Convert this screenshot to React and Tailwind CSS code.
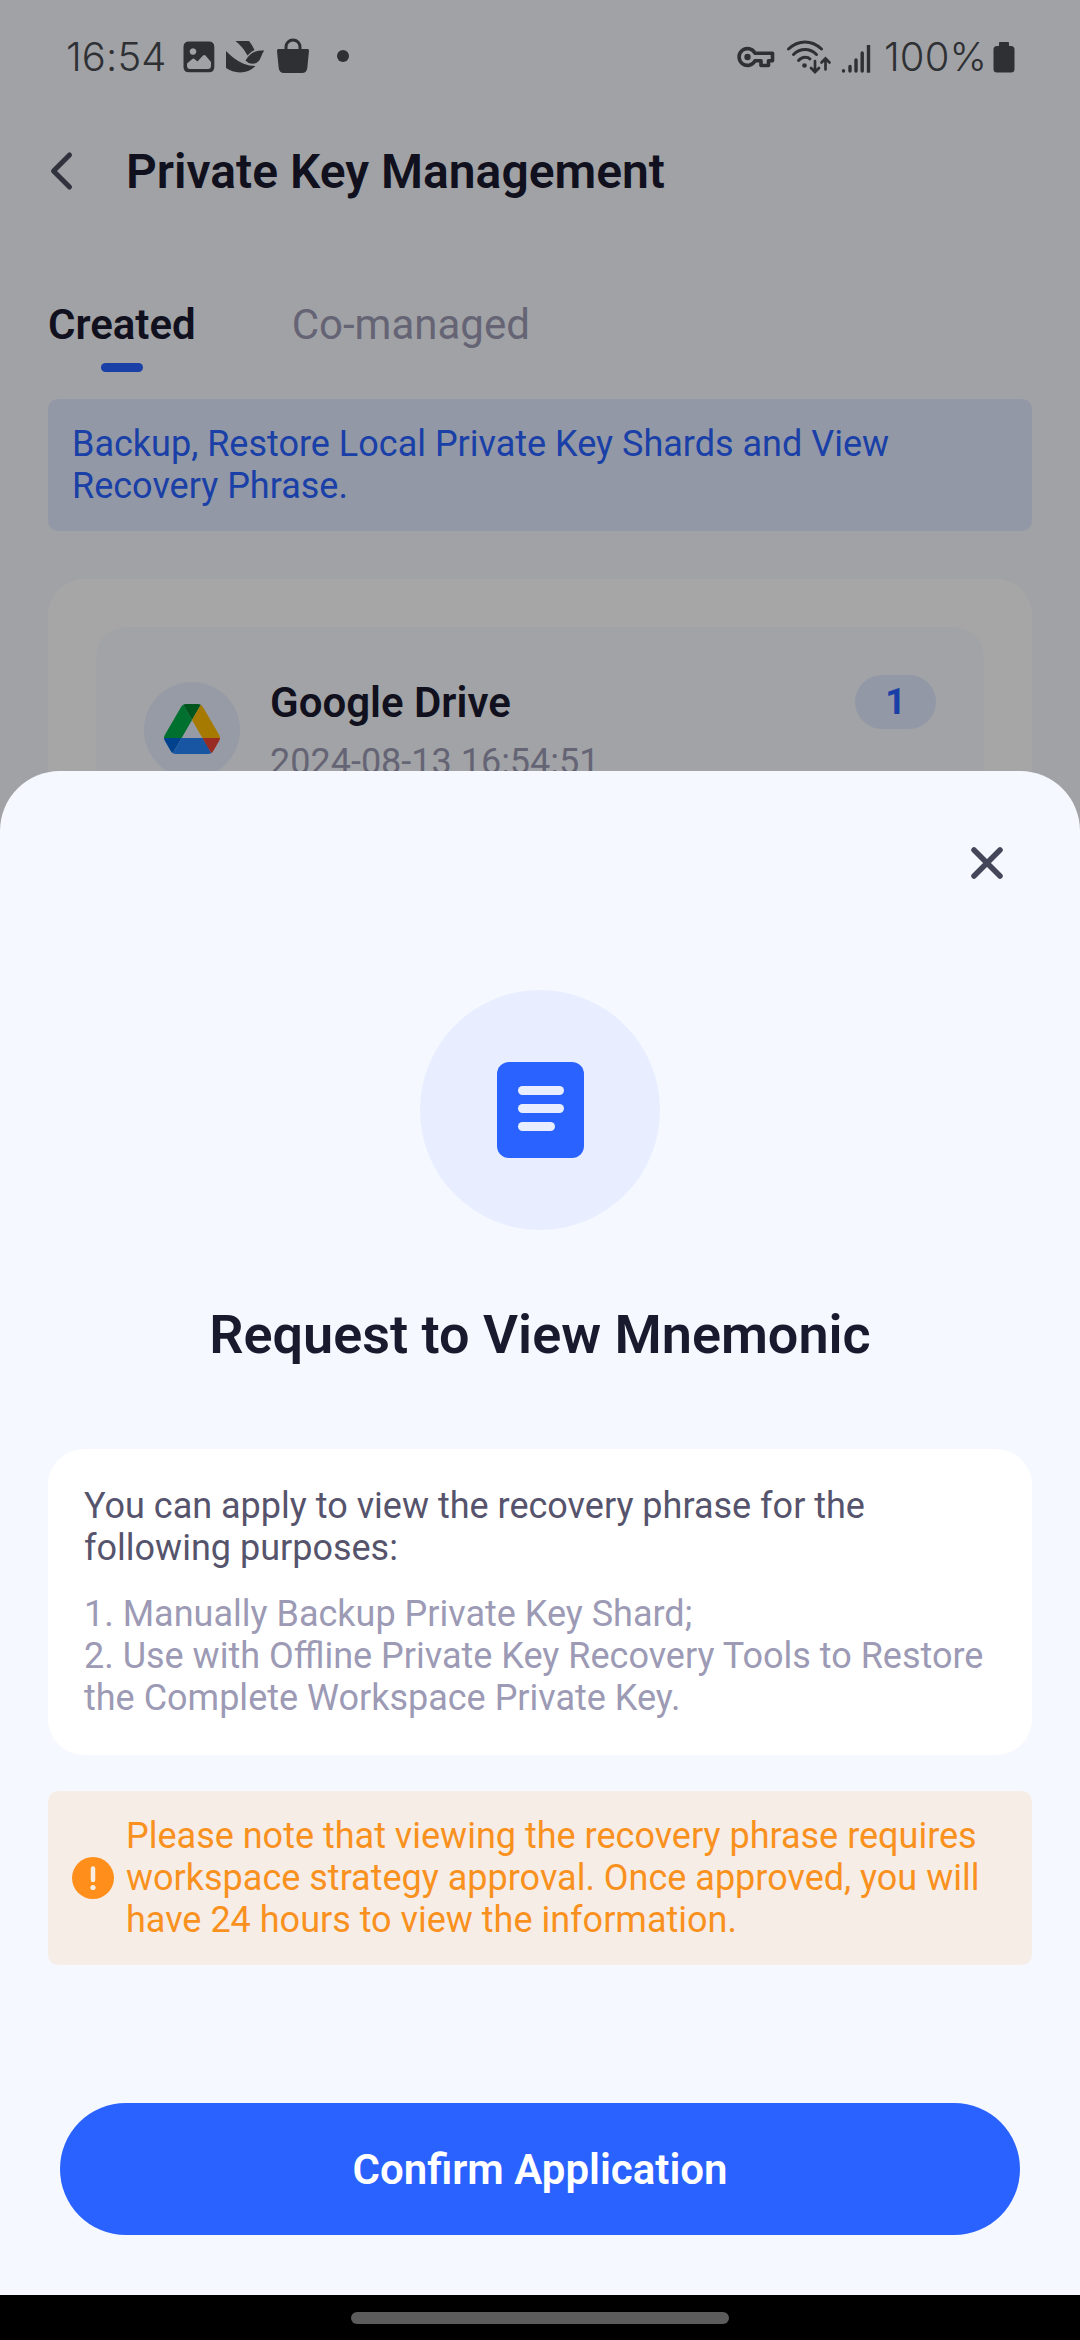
import React from "react";

function ImageIcon() {
  return (
    <svg className="h-[32px] w-[32px]" viewBox="0 0 32 32">
      <path fill="#2e3033" fillRule="evenodd" d="M6 0.5H26Q31.300 0.500 31.300 6V26Q31.300 31.300 26 31.300H6Q0.500 31.300 0.500 26V6Q0.500 0.500 6 0.500ZM10 7.200a3.300 3.300 0 1 0 0.010 0ZM4 24.500Q4 28 7 28H25Q28 28 28 24.500V21L22.500 14.500Q21.300 13.300 20 14.500L14.500 20.500L11.500 18Q10.400 17.200 9.300 18L4 22.500Z" />
    </svg>
  );
}

function BirdIcon() {
  return (
    <svg className="h-[34px] w-[40px]" viewBox="0 0 40 34" fill="#2e3033">
      <path d="M10.500 1H24Q27 4.500 29.500 10Q25 12 22.500 15.500Q18 7 10.500 1Z" />
      <path d="M20.500 20.500Q24.500 13.500 30.500 11.500Q34 10 39.300 10.500Q37.500 12.500 36 17Q33.500 24 27 23.800Q23 23.500 20.500 20.500Z" />
      <path d="M1 11Q9 19.500 18 23.500Q24 26 30.500 26Q24 32.500 15 32.500Q7 32 1 28Z" />
    </svg>
  );
}

function BagIcon() {
  return (
    <svg className="h-[36px] w-[34px]" viewBox="0 0 34 36">
      <path fill="none" stroke="#2e3033" strokeWidth="3" d="M10 12V9a7 7 0 0 1 14 0V12" />
      <path fill="#2e3033" d="M2.500 11H31.500Q33.200 11 33 12.700L31.300 30Q30.800 35 26 35H8Q3.300 35 2.700 30L1 12.700Q0.800 11 2.500 11Z" />
    </svg>
  );
}

function KeyIcon() {
  return (
    <svg className="h-[22px] w-[38px]" viewBox="0 0 38 22">
      <path fill="none" stroke="#2e3033" strokeWidth="3.600" strokeLinejoin="round" d="M18 7.200A8.400 8.400 0 1 0 18 14.800H24V19.500H31.500V14.800H35.500V7.200Z" />
      <circle cx="10.500" cy="11" r="3.200" fill="#2e3033" />
    </svg>
  );
}

function WifiIcon() {
  return (
    <svg className="h-[36px] w-[46px]" viewBox="0 0 46 36" fill="none" stroke="#2e3033" strokeWidth="3" strokeLinecap="round">
      <path d="M2.500 10Q10 3 19 3T35.500 10" />
      <path d="M7.500 15.500Q12.500 10.500 19 10.500T30.500 15.500" />
      <path d="M12.500 21.500Q15.500 18.300 19 18.300T24 20" />
      <circle cx="18.500" cy="26.500" r="2.300" fill="#2e3033" stroke="none" />
      <path strokeWidth="2.700" d="M29 22V32.500M25 29L29 33L33 29M39.500 30.500V20M35.500 23.500L39.500 19.500L43.500 23.500" />
    </svg>
  );
}

function SignalIcon() {
  return (
    <svg className="h-[30px] w-[30px]" viewBox="0 0 30 30" stroke="#2e3033" strokeWidth="3.400" strokeLinecap="round">
      <path d="M2.500 26.800V27M9 22.500V27M15 16V27M21.200 9V27" />
      <path strokeLinecap="butt" d="M27.500 1V28.700" />
    </svg>
  );
}

function BatteryIcon() {
  return (
    <svg className="h-[32px] w-[22px]" viewBox="0 0 22 32" fill="#2e3033">
      <path d="M7 1H15Q16 1 16 2V5H18Q21.500 5 21.500 8.500V28Q21.500 31.500 18 31.500H4Q0.500 31.500 0.500 28V8.500Q0.500 5 4 5H6V2Q6 1 7 1Z" />
    </svg>
  );
}

function StatusBar() {
  return (
    <div className="absolute inset-x-0 top-0 flex h-[114px] items-center pl-[66px] pr-[65px] text-[#2e3033]">
      <span className="w-[117px] font-['Inter',sans-serif] text-[40px] font-light leading-[48px] tracking-[0.1px]">16:54</span>
      <ImageIcon />
      <div className="ml-[10px]"><BirdIcon /></div>
      <div className="ml-[11px] -mt-[3px]"><BagIcon /></div>
      <div className="ml-[27px] -mt-[2px] h-[12px] w-[12px] rounded-full bg-[#2e3033]" />
      <div className="ml-auto"><KeyIcon /></div>
      <div className="ml-[11px]"><WifiIcon /></div>
      <div className="ml-[9px] mt-[3px]"><SignalIcon /></div>
      <span className="ml-[13px] w-[109px] whitespace-nowrap font-['Inter',sans-serif] text-[40px] font-light leading-[48px] tracking-[0.1px]">100%</span>
      <BatteryIcon />
    </div>
  );
}

function DriveLogo() {
  return (
    <svg className="-mt-[2px] h-[50px] w-[56px]" viewBox="0 0 87.3 78">
      <path fill="#0066da" d="m6.600 66.850 3.850 6.650c.8 1.400 1.950 2.500 3.300 3.300l13.750-23.800h-27.500c0 1.550.4 3.100 1.200 4.500z" />
      <path fill="#00ac47" d="m43.650 25-13.750-23.800c-1.350.8-2.500 1.900-3.300 3.300l-25.400 44a9.060 9.060 0 0 0 -1.200 4.500h27.500z" />
      <path fill="#ea4335" d="m73.550 76.800c1.350-.8 2.500-1.900 3.300-3.300l1.600-2.750 7.650-13.250c.8-1.400 1.200-2.950 1.200-4.500h-27.502l5.852 11.500z" />
      <path fill="#00832d" d="m43.650 25 13.750-23.800c-1.350-.8-2.900-1.200-4.500-1.200h-18.500c-1.600 0-3.150.45-4.500 1.200z" />
      <path fill="#2684fc" d="m59.800 53h-32.300l-13.750 23.800c1.350.8 2.900 1.200 4.500 1.200h50.800c1.600 0 3.150-.45 4.500-1.200z" />
      <path fill="#ffba00" d="m73.400 26.500-12.700-22c-.8-1.400-1.950-2.500-3.300-3.300l-13.750 23.800 16.150 28h27.450c0-1.550-.4-3.100-1.200-4.500z" />
    </svg>
  );
}

function KeyManagementPage() {
  return (
    <div className="h-full bg-[#f7f9ff] pt-[114px]">
      <header className="flex h-[114px] items-center">
        <svg className="ml-[48px] h-[42px] w-[28px]" viewBox="0 0 28 42">
          <path d="M21.500 5L5.500 21L21.500 37" fill="none" stroke="#4b4e60" strokeWidth="5" strokeLinecap="round" strokeLinejoin="round" />
        </svg>
        <h1 className="ml-[50px] mt-[2px] text-[48px] font-semibold leading-[56px] text-[#1a1a2e]">Private Key Management</h1>
      </header>
      <nav className="flex h-[171px] gap-[96px] px-[48px] pt-[72px] text-[42px] leading-[49px]">
        <div className="flex flex-col items-center">
          <span className="font-semibold text-[#1a1a2e]">Created</span>
          <span className="mt-[14px] h-[9px] w-[42px] rounded-full bg-[#2962ff]" />
        </div>
        <span className="text-[#9c9ab4]">Co-managed</span>
      </nav>
      <p className="mx-[48px] rounded-[10px] bg-[#e0eaff] p-[24px] text-[36px] leading-[42px] text-[#2962ff]">
        Backup, Restore Local Private Key Shards and View Recovery Phrase.
      </p>
      <section className="mx-[48px] mt-[48px] h-[400px] rounded-[36px] bg-white p-[48px]">
        <div className="flex h-[300px] rounded-[30px] bg-[#f8faff] px-[48px] pt-[48px]">
          <div className="mt-[7px] flex h-[96px] w-[96px] items-center justify-center rounded-full bg-[#e8eefe]">
            <DriveLogo />
          </div>
          <div className="ml-[30px]">
            <h2 className="mt-[3px] text-[42px] font-semibold leading-[49px] text-[#1a1a2e]">Google Drive</h2>
            <p className="mt-[14px] text-[36px] leading-[42px] text-[#9c9ab4]">2024-08-13 16:54:51</p>
          </div>
          <span className="ml-auto flex h-[54px] w-[81px] items-center justify-center rounded-full bg-[#e0eaff] text-[36px] font-bold leading-[42px] text-[#2962ff]">1</span>
        </div>
      </section>
    </div>
  );
}

function RequestSheet() {
  return (
    <div className="absolute inset-x-0 bottom-[45px] top-[771px] flex flex-col rounded-t-[60px] bg-[#f5f8ff] px-[48px]">
      <div className="flex h-[219px] justify-end pr-[24px] pt-[71px]">
        <svg className="h-[42px] w-[42px]" viewBox="0 0 42 42">
          <path d="M8 8L34 34M34 8L8 34" stroke="#434759" strokeWidth="5.500" strokeLinecap="round" />
        </svg>
      </div>
      <div className="flex h-[240px] w-[240px] items-center justify-center self-center rounded-full bg-[#e8eeff]">
        <div className="flex h-[96px] w-[87px] flex-col gap-[9px] rounded-[12px] bg-[#2962ff] pl-[21px] pt-[24px]">
          <span className="h-[9px] w-[46px] rounded-full bg-[#e8eeff]" />
          <span className="h-[9px] w-[46px] rounded-full bg-[#e8eeff]" />
          <span className="h-[9px] w-[37px] rounded-full bg-[#e8eeff]" />
        </div>
      </div>
      <h2 className="mt-[73px] text-center text-[54px] font-semibold leading-[64px] text-[#1a1a2e]">Request to View Mnemonic</h2>
      <div className="mt-[82px] rounded-[36px] bg-white p-[36px] text-[36px] leading-[42px]">
        <p className="text-[#56546c]">You can apply to view the recovery phrase for the following purposes:</p>
        <p className="mt-[24px] text-[#9c9ab4]">
          1. Manually Backup Private Key Shard;
          <br />
          2. Use with Offline Private Key Recovery Tools to Restore the Complete Workspace Private Key.
        </p>
      </div>
      <div className="mt-[36px] flex items-center gap-[12px] rounded-[10px] bg-[#f6ede6] p-[24px]">
        <svg className="h-[42px] w-[42px] shrink-0" viewBox="0 0 42 42">
          <circle cx="21" cy="21" r="21" fill="#ff8f1a" />
          <path d="M21 11.500V23" stroke="#f8ede4" strokeWidth="4.500" strokeLinecap="round" />
          <circle cx="21" cy="30.500" r="2.600" fill="#f8ede4" />
        </svg>
        <p className="text-[36px] leading-[42px] text-[#f9911e]">
          Please note that viewing the recovery phrase requires workspace strategy approval. Once approved, you will have 24 hours to view the information.
        </p>
      </div>
      <button className="mx-[12px] mt-[138px] h-[132px] rounded-full bg-[#2962ff] text-[42px] font-semibold leading-[49px] text-white">Confirm Application</button>
    </div>
  );
}

export default function App() {
  return (
    <div className="relative h-[2340px] w-[1080px] overflow-hidden font-['Roboto',sans-serif]">
      <KeyManagementPage />
      <div className="absolute inset-0 bg-black/35" />
      <StatusBar />
      <RequestSheet />
      <div className="absolute inset-x-0 bottom-0 flex h-[45px] justify-center bg-black pt-[17px]">
        <span className="h-[12px] w-[378px] rounded-full bg-[#5c5c5c]" />
      </div>
    </div>
  );
}
